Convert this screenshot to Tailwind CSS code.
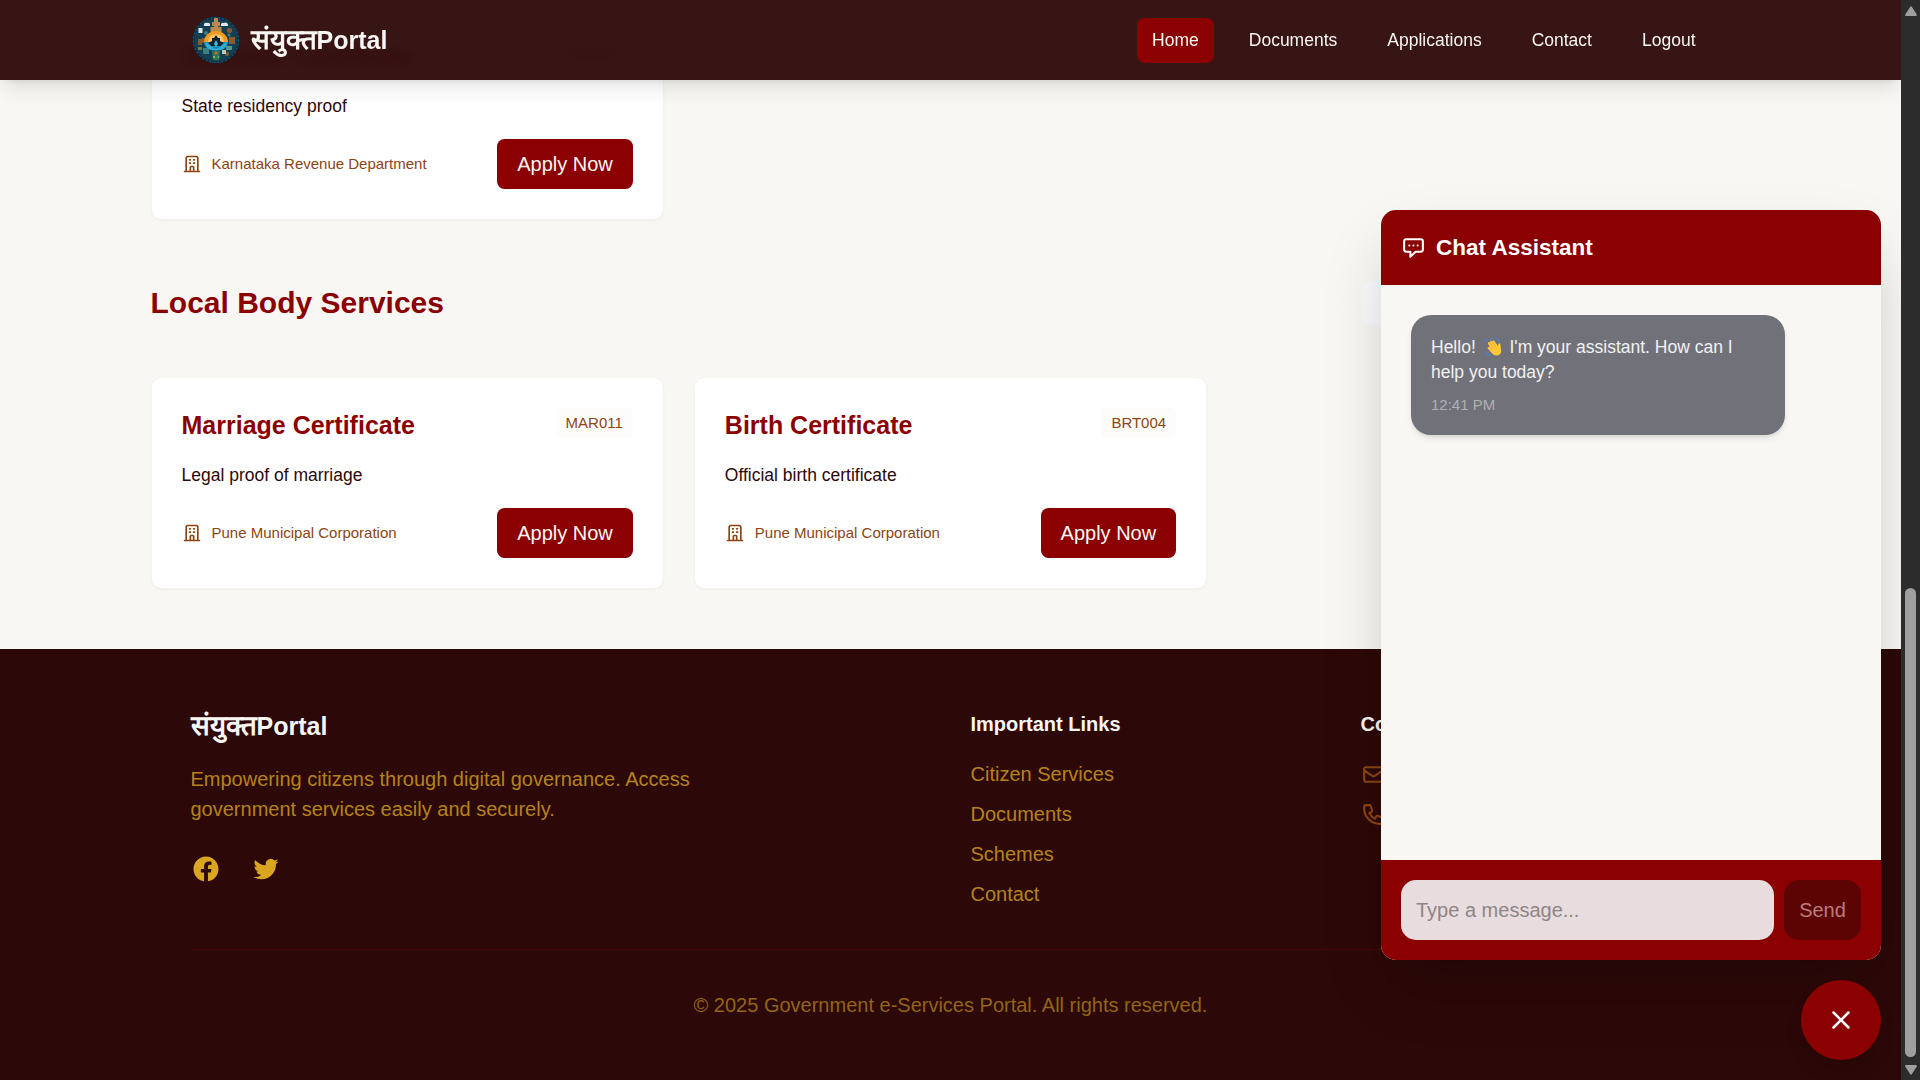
<!DOCTYPE html>
<html lang="en" class="text-[20px]">
<head>
<meta charset="utf-8">
<title>संयुक्तPortal</title>
<script src="https://cdn.jsdelivr.net/npm/@tailwindcss/browser@4"></script>
</head>
<body class="relative h-[1080px] w-[1920px] overflow-hidden bg-[#f8f7f3] font-['Liberation_Sans',Arial,sans-serif] text-base text-[#2d0808]">
<svg class="hidden">
  <symbol id="building" viewBox="0 0 24 24"><path fill="none" stroke="currentColor" stroke-width="2" stroke-linecap="round" stroke-linejoin="round" d="M19 21V5a2 2 0 00-2-2H7a2 2 0 00-2 2v16m14 0h2m-2 0h-5m-9 0H3m2 0h5M9 7h1m-1 4h1m4-4h1m-1 4h1m-5 10v-5a1 1 0 011-1h2a1 1 0 011 1v5m-4 0h4"/></symbol>
</svg>
<div class="flex h-[1080px]">
  <div class="w-[1901px]">
    <!-- Top navigation -->
    <header class="fixed left-0 top-0 z-20 w-[1901px] bg-[#2d0808]/95 shadow-[0_12px_19px_-4px_rgb(0_0_0/0.1),0_5px_8px_-5px_rgb(0_0_0/0.1)] backdrop-blur-sm">
      <div class="mx-auto flex h-16 max-w-7xl items-center justify-between px-8">
        <div class="flex items-center gap-2">
          <svg class="size-10" viewBox="0 0 50 50">
            <circle cx="25" cy="25" r="22.5" fill="#153f50"/>
            <circle cx="25" cy="25" r="22.5" fill="none" stroke="#0c2e45" stroke-width="2"/>
            <circle cx="25" cy="25" r="22.5" fill="none" stroke="#2a7288" stroke-width="1" stroke-dasharray="1.5 2.5"/>
            <g fill="#b98a4b"><rect x="23" y="3" width="4" height="15"/><rect x="21" y="7" width="8" height="4"/><rect x="19.500" y="12" width="11" height="5"/></g>
            <g fill="#8a5a2e"><rect x="36" y="13" width="5" height="5" rx="2"/><rect x="11" y="23" width="3" height="5"/><rect x="38" y="22" width="6" height="7"/><rect x="7" y="24" width="4" height="6"/><circle cx="36" cy="39" r="2"/></g>
            <g fill="#dfe9ec"><rect x="7.500" y="13" width="4" height="5"/><path d="M13 10a2 2 0 013-2 2 2 0 013 2v1h-6zM30 10a2 2 0 013-2 2.500 2.500 0 014 2v1h-7z"/><rect x="31" y="35" width="4" height="4" fill="#b8c7ad"/></g>
            <g fill="#3c7f86"><circle cx="15" cy="18" r="2"/><circle cx="38" cy="20" r="1.500"/><rect x="12" y="33" width="6" height="6"/><rect x="35" y="31" width="6" height="4" fill="#4c9b8f"/><rect x="7" y="32" width="4" height="3" fill="#6b7c4d"/></g>
            <path d="M13 27a12 11 0 0124 0z" fill="#f39a1f"/><path d="M17 27a8 8 0 0116 0z" fill="#ffc768"/>
            <path d="M13 27h24a12 9 0 01-24 0z" fill="#1b87b4"/>
            <path d="M25 20l2 3 2 0 0 3 4 2-3 3H20l-3-3 4-2 0-3 2 0z" fill="#10222f"/>
            <path d="M14 27q4 1 6 4 2 2 5 3 3-1 5-3 2-3 6-4-1 8-7 8h-8q-6 0-7-8z" fill="#2fa9cc"/>
            <path d="M25 25l2 4-2 3-2-3z" fill="#35bfe0"/>
            <path d="M21 36h8l-1 9h-6z" fill="#2d7652"/><circle cx="25" cy="38" r="1.500" fill="#c86b3b"/><circle cx="23" cy="42" r="1" fill="#d0b84e"/><circle cx="27.500" cy="42" r="1" fill="#4fb78a"/>
          </svg>
          <span class="text-xl font-bold text-[#f8f6f2]"><span class="text-[27.8px]/[20px]">संयुक्त</span>Portal</span>
        </div>
        <nav class="flex gap-4 text-sm text-[#f8f6f2]">
          <a class="rounded-md bg-[#8b0000] px-3 py-2">Home</a>
          <a class="px-3 py-2">Documents</a>
          <a class="px-3 py-2">Applications</a>
          <a class="px-3 py-2">Contact</a>
          <a class="px-3 py-2">Logout</a>
        </nav>
      </div>
    </header>

    <main class="h-[649px] pt-[8px]">
      <div class="mx-auto max-w-7xl">
        <div class="grid grid-cols-3 gap-6">
          <article class="rounded-lg border border-[#f6f4f0] bg-white bg-clip-padding p-6 shadow-[0_1px_2px_rgb(0_0_0/0.04)]">
            <div class="mb-4 flex items-start justify-between">
              <h3 class="text-xl font-bold text-[#8b0000]">Domicile Certificate</h3>
              <span class="rounded-sm bg-[#f8f6f2]/30 px-2 py-1 text-xs text-[#8b4513]">DOM007</span>
            </div>
            <p class="mb-4 text-sm">State residency proof</p>
            <div class="flex items-center justify-between">
              <div class="flex items-center gap-2 text-xs text-[#8b4513]"><svg class="size-4"><use href="#building"/></svg>Karnataka Revenue Department</div>
              <button class="rounded-md bg-[#8b0000] px-4 py-2 text-[#f8f6f2]">Apply Now</button>
            </div>
          </article>
        </div>

        <div class="mb-[52px] mt-[61px] flex h-[44px] items-center justify-between">
          <h2 class="text-2xl font-bold text-[#8b0000]">Local Body Services</h2>
          <div class="h-[44px] w-[388px] rounded-md bg-[#fafafc]"></div>
        </div>

        <div class="grid grid-cols-3 gap-6">
          <article class="rounded-lg border border-[#f6f4f0] bg-white bg-clip-padding p-6 shadow-[0_1px_2px_rgb(0_0_0/0.04)]">
            <div class="mb-4 flex items-start justify-between">
              <h3 class="text-xl font-bold text-[#8b0000]">Marriage Certificate</h3>
              <span class="rounded-sm bg-[#f8f6f2]/30 px-2 py-1 text-xs text-[#8b4513]">MAR011</span>
            </div>
            <p class="mb-4 text-sm">Legal proof of marriage</p>
            <div class="flex items-center justify-between">
              <div class="flex items-center gap-2 text-xs text-[#8b4513]"><svg class="size-4"><use href="#building"/></svg>Pune Municipal Corporation</div>
              <button class="rounded-md bg-[#8b0000] px-4 py-2 text-[#f8f6f2]">Apply Now</button>
            </div>
          </article>
          <article class="rounded-lg border border-[#f6f4f0] bg-white bg-clip-padding p-6 shadow-[0_1px_2px_rgb(0_0_0/0.04)]">
            <div class="mb-4 flex items-start justify-between">
              <h3 class="text-xl font-bold text-[#8b0000]">Birth Certificate</h3>
              <span class="rounded-sm bg-[#f8f6f2]/30 px-2 py-1 text-xs text-[#8b4513]">BRT004</span>
            </div>
            <p class="mb-4 text-sm">Official birth certificate</p>
            <div class="flex items-center justify-between">
              <div class="flex items-center gap-2 text-xs text-[#8b4513]"><svg class="size-4"><use href="#building"/></svg>Pune Municipal Corporation</div>
              <button class="rounded-md bg-[#8b0000] px-4 py-2 text-[#f8f6f2]">Apply Now</button>
            </div>
          </article>
        </div>
      </div>
    </main>

    <footer class="h-[431px] bg-[#2d0808] py-12">
      <div class="mx-auto max-w-7xl px-8">
        <div class="grid grid-cols-4 gap-8">
          <div class="col-span-2">
            <h3 class="mb-4 text-xl font-bold text-[#f8f6f2]"><span class="text-[27.8px]/[20px]">संयुक्त</span>Portal</h3>
            <p class="max-w-md text-[#daa520]/80">Empowering citizens through digital governance. Access government services easily and securely.</p>
            <div class="mt-6 flex gap-6 text-[#daa520]">
              <svg class="size-6" viewBox="0 0 24 24" fill="currentColor"><path d="M22 12c0-5.523-4.477-10-10-10S2 6.477 2 12c0 4.991 3.657 9.128 8.438 9.878v-6.987h-2.540V12h2.540V9.797c0-2.506 1.492-3.890 3.777-3.890 1.094 0 2.238.195 2.238.195v2.460h-1.260c-1.243 0-1.630.771-1.630 1.562V12h2.773l-.443 2.890h-2.330v6.988C18.343 21.128 22 16.991 22 12z"/></svg>
              <svg class="size-6" viewBox="0 0 24 24" fill="currentColor"><path d="M8.290 20.251c7.547 0 11.675-6.253 11.675-11.675 0-.178 0-.355-.012-.530A8.348 8.348 0 0022 5.920a8.190 8.190 0 01-2.357.646 4.118 4.118 0 001.804-2.270 8.224 8.224 0 01-2.605.996 4.107 4.107 0 00-6.993 3.743 11.650 11.650 0 01-8.457-4.287 4.106 4.106 0 001.270 5.477A4.072 4.072 0 012.800 9.713v.052a4.105 4.105 0 003.292 4.022 4.095 4.095 0 01-1.853.070 4.108 4.108 0 003.834 2.850A8.233 8.233 0 012 18.407a11.616 11.616 0 006.290 1.840"/></svg>
            </div>
          </div>
          <div>
            <h4 class="mb-4 font-bold text-[#f8f6f2]">Important Links</h4>
            <ul class="flex flex-col gap-2 text-[#daa520]/80">
              <li>Citizen Services</li><li>Documents</li><li>Schemes</li><li>Contact</li>
            </ul>
          </div>
          <div>
            <h4 class="mb-4 font-bold text-[#f8f6f2]">Contact</h4>
            <ul class="flex flex-col gap-2 text-[#8b4513]">
              <li class="flex h-[30px] items-center"><svg class="size-5" viewBox="0 0 24 24" fill="none" stroke="currentColor" stroke-width="2" stroke-linecap="round" stroke-linejoin="round"><path d="M3 8l7.890 5.260a2 2 0 002.220 0L21 8M5 19h14a2 2 0 002-2V7a2 2 0 00-2-2H5a2 2 0 00-2 2v10a2 2 0 002 2z"/></svg></li>
              <li class="flex h-[30px] items-center"><svg class="size-5" viewBox="0 0 24 24" fill="none" stroke="currentColor" stroke-width="2" stroke-linecap="round" stroke-linejoin="round"><path d="M3 5a2 2 0 012-2h3.280a1 1 0 01.948.684l1.498 4.493a1 1 0 01-.502 1.210l-2.257 1.130a11.042 11.042 0 005.516 5.516l1.130-2.257a1 1 0 011.210-.502l4.493 1.498a1 1 0 01.684.949V19a2 2 0 01-2 2h-1C9.716 21 3 14.284 3 6V5z"/></svg></li>
            </ul>
          </div>
        </div>
        <div class="mt-8 border-t border-[#8b0000]/25 pt-8 text-center text-[#daa520]/60">© 2025 Government e-Services Portal. All rights reserved.</div>
      </div>
    </footer>
  </div>

  <!-- Page scrollbar -->
  <div class="relative z-30 flex w-[19px] flex-col items-center bg-[#2c2c2c]">
    <svg class="mt-[6px] h-[10px] w-[12px] shrink-0" viewBox="0 0 12 10"><path d="M6 1.200L11 9H1z" fill="#9f9f9f" stroke="#9f9f9f" stroke-width="1.800" stroke-linejoin="round"/></svg>
    <div class="mt-[572px] h-[469px] w-[11px] shrink-0 rounded-full bg-[#9f9f9f]"></div>
    <svg class="mt-[8px] h-[10px] w-[12px] shrink-0" viewBox="0 0 12 10"><path d="M6 8.800L11 1H1z" fill="#9f9f9f" stroke="#9f9f9f" stroke-width="1.800" stroke-linejoin="round"/></svg>
  </div>
</div>

<!-- Chat widget -->
<section class="absolute left-[1381px] top-[210px] z-10 flex h-[750px] w-[500px] flex-col overflow-hidden rounded-xl bg-[#f8f7f3] shadow-[0_31px_62px_-15px_rgb(0_0_0/0.25)]">
  <div class="flex items-center gap-2 bg-[#8b0000] p-4 text-white">
    <svg class="size-5" viewBox="0 0 24 24" fill="none" stroke="currentColor" stroke-width="2" stroke-linecap="round" stroke-linejoin="round"><path d="M8 10h.010M12 10h.010M16 10h.010M9 16H5a2 2 0 01-2-2V6a2 2 0 012-2h14a2 2 0 012 2v8a2 2 0 01-2 2h-5l-5 5v-5z"/></svg>
    <h3 class="text-lg/[35px] font-bold">Chat Assistant</h3>
  </div>
  <div class="flex-1 p-6">
    <div class="w-[85%] rounded-2xl bg-[#71717a] p-4 shadow-md">
      <p class="text-sm text-white/90">Hello! <svg class="inline-block h-[20px] w-[24px] align-[-4px]" viewBox="0.5 0 25 20">
        <path d="M5 15q2 3 5 4M5 4l2-2" fill="none" stroke="#4d83d8" stroke-width="1.300" stroke-linecap="round"/><path d="M10 3l2-2M20 4q-1-2-3-3" fill="none" stroke="#4d83d8" stroke-width="1.200" stroke-linecap="round"/>
        <path d="M9.500 10L7.800 6.300q-.3-1.800 1.400-1.500l.8.800q-.2-2.200 1.400-2.200l1.100.9q.4-1.600 1.800-.9l4.200 6.200q-.5-3 .8-3.400 1.600 0 1.500 2.100l.7 5q.3 4.500-3.800 5.500-3.400.7-5.600-2l-4.600-5.200q-.5-1.800 1.200-1.500z" fill="#ffc83d"/>
        <path d="M10 6l4 5M12.500 4.500l3.800 5.300M9.500 10.200l3.300 3.500" fill="none" stroke="#e59f22" stroke-width=".7"/>
      </svg> I'm your assistant. How can I help you today?</p>
      <p class="mt-2 text-xs text-white/45">12:41 PM</p>
    </div>
  </div>
  <div class="flex h-[100px] gap-2 bg-[#8b0000] p-4">
    <div class="flex w-[373px] items-center rounded-xl bg-[#e8dcde] px-[15px] text-[#8d8587]">Type a message...</div>
    <button class="flex-1 rounded-xl bg-[#5c0303] text-center text-[#bb7c7b]">Send</button>
  </div>
</section>
<button class="absolute left-[1801px] top-[980px] z-10 flex size-16 items-center justify-center rounded-full bg-[#8b0000] text-white shadow-[0_12px_19px_-4px_rgb(0_0_0/0.15)]">
  <svg class="size-6" viewBox="0 0 24 24" fill="none" stroke="currentColor" stroke-width="2" stroke-linecap="round"><path d="M6 18L18 6M6 6l12 12"/></svg>
</button>
</body>
</html>
